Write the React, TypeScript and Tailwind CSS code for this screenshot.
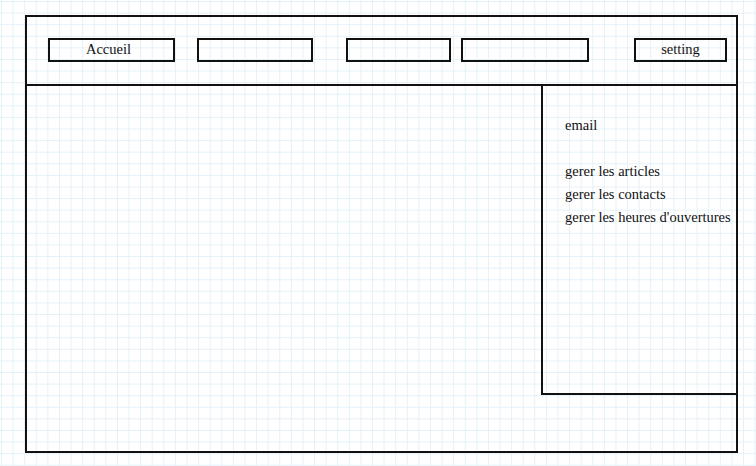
export default function App() {
  const font = { fontFamily: '"Liberation Serif", "DejaVu Serif", serif' }

  return (
    <div
      className="w-[756px] h-[466px] bg-white bg-[linear-gradient(to_right,#e4f1f8_1px,transparent_1px),linear-gradient(to_bottom,#e4f1f8_1px,transparent_1px)] bg-[size:11.6px_11.6px] bg-[position:1px_1px] pt-[15px] pl-[25px] text-[#111]"
      style={font}
    >
      <div className="w-[713px] h-[438px] border-2 border-[#111] flex flex-col">
        {/* top bar */}
        <div className="h-[69px] border-b-2 border-[#111] flex items-start pt-[21px] pl-[21px] shrink-0">
          <div className="w-[127px] h-[24px] border-2 border-[#111] flex items-center justify-center pr-[6px] text-[14.5px]">
            Accueil
          </div>
          <div className="ml-[22px] w-[116px] h-[24px] border-2 border-[#111]" />
          <div className="ml-[33px] w-[105px] h-[24px] border-2 border-[#111]" />
          <div className="ml-[10px] w-[128px] h-[24px] border-2 border-[#111]" />
          <div className="ml-[45px] w-[93px] h-[24px] border-2 border-[#111] flex items-center justify-center text-[14.5px]">
            setting
          </div>
        </div>

        {/* body */}
        <div className="flex-1 flex justify-end">
          <div className="w-[195px] h-[310px] -mt-[1px] border-l-2 border-b-2 border-[#111] pl-[22px] pt-[29px] text-[14.5px] leading-[23px]">
            <div>email</div>
            <div className="mt-[23px]">gerer les articles</div>
            <div>gerer les contacts</div>
            <div className="whitespace-nowrap">gerer les heures d'ouvertures</div>
          </div>
        </div>
      </div>
    </div>
  )
}
